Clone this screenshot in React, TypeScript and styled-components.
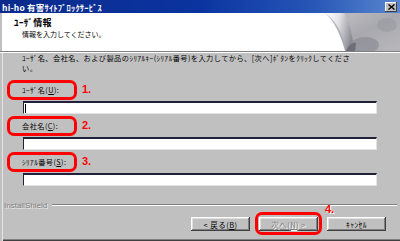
import React from "react";
import styled, { createGlobalStyle } from "styled-components";

const jp = `"Noto Sans CJK JP", "Liberation Sans", sans-serif`;

const GlobalStyle = createGlobalStyle`
  html, body {
    margin: 0;
    padding: 0;
    background: #c0c0c0;
  }
  #root {
    width: 400px;
    height: 241px;
  }
`;

const Window = styled.div`
  width: 400px;
  height: 241px;
  box-sizing: border-box;
  display: flex;
  flex-direction: column;
  background: #c0c0c0;
  font-family: ${jp};
  color: #000;
  overflow: hidden;
`;

const TitleBar = styled.div`
  height: 13px;
  flex: none;
  display: flex;
  align-items: center;
  justify-content: space-between;
  padding: 0 3px 0 2px;
  background: linear-gradient(to right, #0a2a8c 0%, #0b34a0 50%, #2656b6 78%, #5a86d0 100%);
  color: #fff;
  font-size: 8.5px;
  font-weight: bold;
  letter-spacing: 0.2px;
  white-space: nowrap;
`;

const CloseButton = styled.div`
  width: 12px;
  height: 10px;
  box-sizing: border-box;
  background: #c0c0c0;
  box-shadow: inset -1px -1px #404040, inset 1px 1px #fff;
  display: flex;
  align-items: center;
  justify-content: center;
  margin-top: 1px;
`;

const Header = styled.div`
  height: 38px;
  flex: none;
  background: #fff;
  display: flex;
  justify-content: space-between;
  box-shadow: inset 2px 0 #c0c0c0;
`;

const HeaderText = styled.div`
  padding: 4px 0 0 14px;
  display: flex;
  flex-direction: column;
`;

const HeaderTitle = styled.div`
  font-weight: bold;
  font-size: 9px;
  line-height: 11px;
  letter-spacing: 0.4px;
`;

const HeaderSub = styled.div`
  padding-left: 8px;
  margin-top: 1px;
  font-size: 7px;
  line-height: 11px;
`;

const Separator = styled.div`
  height: 2px;
  flex: none;
  box-sizing: border-box;
  border-top: 1px solid #808080;
  border-bottom: 1px solid #fff;
`;

const Body = styled.div`
  flex: 1;
  display: flex;
  flex-direction: column;
  box-shadow: inset 2px 0 #c0c0c0, inset 3px 0 #e4e4e4, inset 0 -1px #404040, inset 0 -2px #808080;
  font-size: 7.2px;
  letter-spacing: 0.45px;
`;

const Intro = styled.div`
  padding-left: 22px;
  line-height: 10px;
  white-space: nowrap;
`;

const Field = styled.div<{ $first?: boolean }>`
  display: flex;
  flex-direction: column;
  margin-top: ${(p) => (p.$first ? "7px" : "2px")};
`;

const FieldHead = styled.div`
  display: flex;
  align-items: flex-start;
`;

const LabelBox = styled.label`
  width: 70px;
  height: 20px;
  box-sizing: border-box;
  margin-left: 7px;
  border: 3px solid #ff0000;
  border-radius: 7px;
  padding-left: 12px;
  display: flex;
  align-items: center;
  white-space: nowrap;
`;

const Mark = styled.span`
  margin: 4px 0 0 5px;
  color: #ff0000;
  font-family: "Liberation Sans", Arial, sans-serif;
  font-weight: bold;
  font-size: 11px;
  line-height: 10px;
  letter-spacing: 0;
`;

const TextBox = styled.div`
  width: 354px;
  height: 13px;
  box-sizing: border-box;
  margin: 1px 0 0 23px;
  background: #fff;
  border-top: 2px solid #20203a;
  border-left: 1px solid #20203a;
  border-right: 1px solid #e4e4e4;
  border-bottom: 1px solid #e4e4e4;
  display: flex;
  align-items: center;
`;

const Caret = styled.span`
  width: 1px;
  height: 9px;
  margin-left: 1px;
  background: #000;
`;

const BrandRow = styled.div`
  margin-top: 13px;
  height: 12px;
  display: flex;
  align-items: center;
  padding: 0 3px 0 4px;
  gap: 5px;
`;

const Brand = styled.span`
  font-family: "Liberation Sans", Arial, sans-serif;
  font-size: 8px;
  letter-spacing: 0;
  color: #808080;
  text-shadow: 1px 1px 0 #ececec;
`;

const Etch = styled.div`
  flex: 1;
  height: 2px;
  box-sizing: border-box;
  border-top: 1px solid #808080;
  border-bottom: 1px solid #fff;
`;

const ButtonRow = styled.div`
  margin-top: 6px;
  display: flex;
  justify-content: flex-end;
  gap: 9px;
  padding-right: 14px;
`;

const Button = styled.div<{ $disabled?: boolean }>`
  position: relative;
  width: 59px;
  height: 14px;
  box-sizing: border-box;
  background: #c0c0c0;
  box-shadow: inset -1px -1px #404040, inset 1px 1px #fff, inset -2px -2px #808080, inset 2px 2px #dfdfdf;
  display: flex;
  align-items: center;
  justify-content: center;
  white-space: nowrap;
  font-size: 7.5px;
  color: ${(p) => (p.$disabled ? "#808080" : "#000")};
  text-shadow: ${(p) => (p.$disabled ? "1px 1px 0 #fff" : "none")};
`;

const Ring = styled.span`
  position: absolute;
  left: -4px;
  top: -5px;
  right: -4px;
  bottom: -4px;
  border: 3px solid #ff0000;
  border-radius: 7px;
  pointer-events: none;
`;

const ButtonMark = styled(Mark)`
  position: absolute;
  left: calc(100% + 7px);
  top: -13px;
  margin: 0;
`;

const PageCurl = () => (
  <svg width="75" height="38" viewBox="0 0 75 38">
    <defs>
      <linearGradient id="tex" x1="0" y1="0" x2="1" y2="1">
        <stop offset="0" stopColor="#c4c4c8" />
        <stop offset="0.5" stopColor="#a8a8ae" />
        <stop offset="1" stopColor="#b8b8bc" />
      </linearGradient>
      <linearGradient id="curl" x1="0" y1="0" x2="1" y2="0.3">
        <stop offset="0" stopColor="#ffffff" />
        <stop offset="0.45" stopColor="#e6e6ea" />
        <stop offset="1" stopColor="#8a8a92" />
      </linearGradient>
    </defs>
    <path d="M0 0 H75 V38 H20 C16 22 9 8 0 0 Z" fill="url(#tex)" />
    <ellipse cx="40" cy="32" rx="14" ry="8" fill="#8c8c94" opacity="0.7" />
    <ellipse cx="62" cy="12" rx="10" ry="7" fill="#9a9aa2" opacity="0.6" />
    <path d="M0 0 C9 6 15 16 18 26 C19 31 20 35 21 38 L30 38 C28 30 27 22 25 14 C23 8 21 3 19 0 Z" fill="url(#curl)" />
    <path d="M21 38 C23 33 27 29 31 30 L30 38 Z" fill="#6e6e78" />
  </svg>
);

export default function App() {
  return (
    <>
      <GlobalStyle />
      <Window>
        <TitleBar>
          <span>hi-ho 有害ｻｲﾄﾌﾞﾛｯｸｻｰﾋﾞｽ</span>
          <CloseButton>
            <svg width="7" height="6" viewBox="0 0 7 6">
              <path d="M0.5 0.5 L6.5 5.5 M6.5 0.5 L0.5 5.5" stroke="#000" strokeWidth="1.4" />
            </svg>
          </CloseButton>
        </TitleBar>
        <Header>
          <HeaderText>
            <HeaderTitle>ﾕｰｻﾞ情報</HeaderTitle>
            <HeaderSub>情報を入力してください。</HeaderSub>
          </HeaderText>
          <PageCurl />
        </Header>
        <Separator />
        <Body>
          <Intro>
            ﾕｰｻﾞ名、会社名、および製品のｼﾘｱﾙｷｰ(ｼﾘｱﾙ番号)を入力してから、[次へ]ﾎﾞﾀﾝをｸﾘｯｸしてくださ
            <br />
            い。
          </Intro>
          <Field $first>
            <FieldHead>
              <LabelBox>
                ﾕｰｻﾞ名(<u>U</u>):
              </LabelBox>
              <Mark>1.</Mark>
            </FieldHead>
            <TextBox>
              <Caret />
            </TextBox>
          </Field>
          <Field>
            <FieldHead>
              <LabelBox>
                会社名(<u>C</u>):
              </LabelBox>
              <Mark>2.</Mark>
            </FieldHead>
            <TextBox />
          </Field>
          <Field>
            <FieldHead>
              <LabelBox>
                ｼﾘｱﾙ番号(<u>S</u>):
              </LabelBox>
              <Mark>3.</Mark>
            </FieldHead>
            <TextBox />
          </Field>
          <BrandRow>
            <Brand>InstallShield</Brand>
            <Etch />
          </BrandRow>
          <ButtonRow>
            <Button>
              &lt; 戻る(<u>B</u>)
            </Button>
            <Button $disabled>
              次へ(<u>N</u>) &gt;
              <Ring />
              <ButtonMark>4.</ButtonMark>
            </Button>
            <Button>ｷｬﾝｾﾙ</Button>
          </ButtonRow>
        </Body>
      </Window>
    </>
  );
}
